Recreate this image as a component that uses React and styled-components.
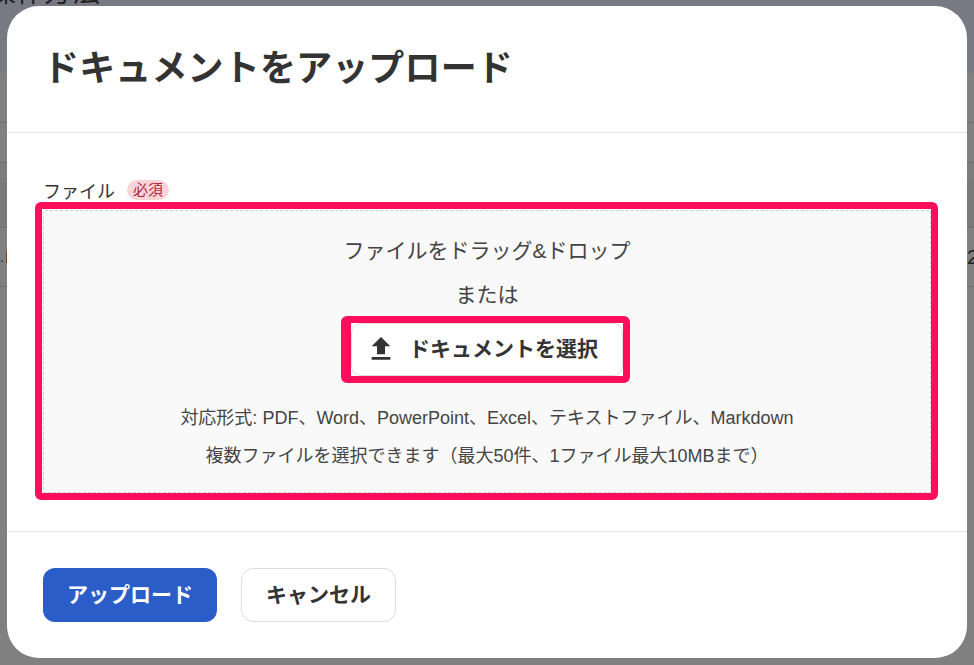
import styled, { createGlobalStyle } from "styled-components";

const GlobalStyle = createGlobalStyle`
  html, body {
    margin: 0;
    padding: 0;
    height: 100%;
    overflow: hidden;
    background: #808080;
    font-family: "Liberation Sans", "Noto Sans CJK JP", sans-serif;
  }
`;

const Page = styled.div`
  position: relative;
  width: 974px;
  height: 665px;
  overflow: hidden;
  background: #808080;
`;

const BackdropTop = styled.div`
  height: 73px;
  background: #777a83;
  overflow: hidden;
`;

const PageHeading = styled.h2`
  margin: -27px 0 0 -12px;
  font-size: 28px;
  line-height: 40px;
  font-weight: 400;
  color: #222;
`;

const BackdropRow = styled.div`
  display: flex;
  justify-content: space-between;
  align-items: center;
  box-sizing: border-box;
  height: ${(p) => p.$height}px;
  border-bottom: ${(p) => (p.$plain ? "none" : "1px solid #6f6f6f")};
  background: ${(p) => p.$bg || "#808080"};
  color: #222;
`;

const BackdropLink = styled.span`
  display: flex;
  align-items: flex-end;
  height: 12px;
  width: 7px;
  box-sizing: border-box;
  border-right: 1px solid #74461c;
  font-size: 14px;
  line-height: 12px;
`;

const BackdropValue = styled.span`
  margin-right: -4px;
  font-size: 20px;
`;

const Overlay = styled.div`
  position: absolute;
  inset: 6px 7px 7px 7px;
`;

const Modal = styled.div`
  display: flex;
  flex-direction: column;
  height: 100%;
  background: #fff;
  border-radius: 32px;
  overflow: hidden;
  color: #333;
`;

const ModalHeader = styled.header`
  box-sizing: border-box;
  height: 127px;
  padding: 38px 36px 0;
  border-bottom: 1px solid #e6e6e6;
`;

const Title = styled.h1`
  margin: 0;
  font-size: 36px;
  line-height: 50px;
  font-weight: 700;
  letter-spacing: 0.15px;
  color: #333;
`;

const ModalBody = styled.div`
  box-sizing: border-box;
  height: 399px;
  padding: 45px 29px 0 28px;
  border-bottom: 1px solid #e6e6e6;
`;

const LabelRow = styled.div`
  display: flex;
  align-items: center;
  gap: 12px;
  height: 24px;
  padding-left: 8px;
`;

const Label = styled.span`
  font-size: 18px;
  color: #333;
`;

const RequiredBadge = styled.span`
  padding: 0 6px;
  height: 20px;
  line-height: 20px;
  border-radius: 10px;
  background: #f9d5da;
  color: #b3243c;
  font-size: 15px;
`;

const Highlight = styled.div`
  box-sizing: border-box;
  border: 7px solid #ff0f5b;
  border-radius: 6px;
  padding: 1px 0 0 1px;
  background: #fff;
`;

const DropZone = styled.div`
  box-sizing: border-box;
  height: 283px;
  display: flex;
  flex-direction: column;
  align-items: center;
  background: #f9f9f9;
  border: 1px dashed #cfcfcf;
  border-radius: 2px;
  padding-top: 26px;
`;

const DropTitle = styled.p`
  margin: 0;
  font-size: 21px;
  line-height: 28px;
  color: #444;
`;

const Or = styled.p`
  margin: 17px 0 8px;
  font-size: 21px;
  line-height: 26px;
  color: #444;
`;

const ButtonHighlight = styled.div`
  box-sizing: border-box;
  width: 289px;
  height: 67px;
  margin-right: 3px;
  border: 7px solid #ff0f5b;
  border-left-width: 10px;
  border-radius: 6px;
  background: #fff;
`;

const SelectButton = styled.button`
  display: flex;
  align-items: center;
  box-sizing: border-box;
  width: 100%;
  height: 100%;
  padding: 0 0 2px 13px;
  gap: 12px;
  background: #fff;
  border: 1px solid #ddd;
  border-radius: 10px;
  font: 700 21px "Liberation Sans", "Noto Sans CJK JP", sans-serif;
  color: #333;
`;

const SelectLabel = styled.span`
  padding-bottom: 3px;
`;

const Note = styled.p`
  margin: ${(p) => p.$top}px 0 0;
  font-size: 18px;
  line-height: 24px;
  color: #444;
`;

const Footer = styled.footer`
  display: flex;
  gap: 24px;
  padding: 36px 36px 0;
`;

const FooterButton = styled.button`
  box-sizing: border-box;
  height: 54px;
  width: ${(p) => p.$width}px;
  padding: 0 0 5px;
  border-radius: 12px;
  font: 700 21px "Liberation Sans", "Noto Sans CJK JP", sans-serif;
  background: ${(p) => (p.$primary ? "#2b5dc9" : "#fff")};
  color: ${(p) => (p.$primary ? "#fff" : "#333")};
  border: ${(p) => (p.$primary ? "none" : "1px solid #ddd")};
`;

function UploadIcon() {
  return (
    <svg width="32" height="32" viewBox="0 0 24 24" fill="#333" aria-hidden="true">
      <path d="M9 16h6v-6h4l-7-7-7 7h4zm-4 2h14v2H5z" />
    </svg>
  );
}

export default function App() {
  return (
    <>
      <GlobalStyle />
      <Page>
        <BackdropTop>
          <PageHeading>操作方法</PageHeading>
        </BackdropTop>
        <BackdropRow $height={50} />
        <BackdropRow $height={40} />
        <BackdropRow $height={19} $plain $bg="#7d7d7d" />
        <BackdropRow $height={46} $bg="#797979" />
        <BackdropRow $height={59}>
          <BackdropLink>.</BackdropLink>
          <BackdropValue>2</BackdropValue>
        </BackdropRow>
        <Overlay>
          <Modal>
            <ModalHeader>
              <Title>ドキュメントをアップロード</Title>
            </ModalHeader>
            <ModalBody>
              <LabelRow>
                <Label>ファイル</Label>
                <RequiredBadge>必須</RequiredBadge>
              </LabelRow>
              <Highlight>
                <DropZone>
                  <DropTitle>ファイルをドラッグ&ドロップ</DropTitle>
                  <Or>または</Or>
                  <ButtonHighlight>
                    <SelectButton type="button">
                      <UploadIcon />
                      <SelectLabel>ドキュメントを選択</SelectLabel>
                    </SelectButton>
                  </ButtonHighlight>
                  <Note $top={23}>対応形式: PDF、Word、PowerPoint、Excel、テキストファイル、Markdown</Note>
                  <Note $top={14}>複数ファイルを選択できます（最大50件、1ファイル最大10MBまで）</Note>
                </DropZone>
              </Highlight>
            </ModalBody>
            <Footer>
              <FooterButton $primary $width={174} type="button">アップロード</FooterButton>
              <FooterButton $width={155} type="button">キャンセル</FooterButton>
            </Footer>
          </Modal>
        </Overlay>
      </Page>
    </>
  );
}
